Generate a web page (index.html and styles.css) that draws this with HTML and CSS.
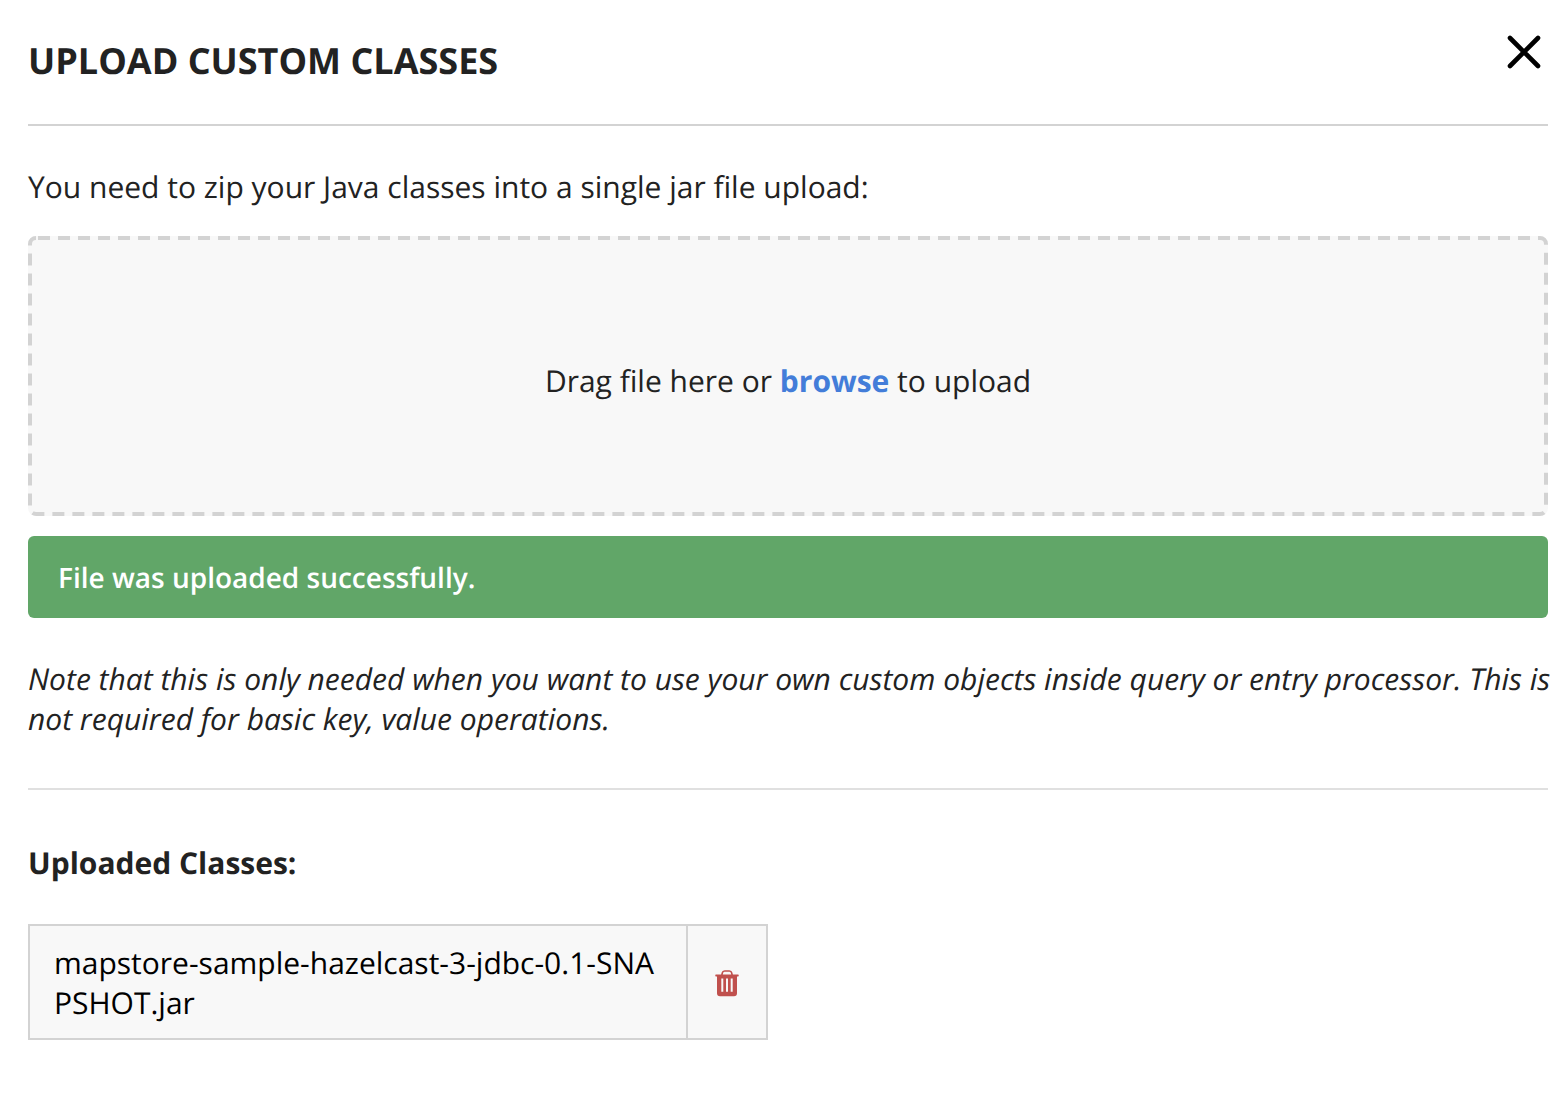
FILE: index.html
```html
<!DOCTYPE html>
<html lang="en">
<head>
<meta charset="utf-8">
<title>Upload Custom Classes</title>
<link rel="stylesheet" href="styles.css">
</head>
<body>
<main class="dialog">
  <header class="dialog-header">
    <h1 class="dialog-title">UPLOAD CUSTOM CLASSES</h1>
    <button class="close-button" type="button" aria-label="Close">
      <svg class="close-icon" viewBox="0 0 36 36" aria-hidden="true"><path d="M4 4 32 32M32 4 4 32" fill="none" stroke="currentColor" stroke-width="4.6" stroke-linecap="round"/></svg>
    </button>
  </header>
  <p class="intro">You need to zip your Java classes into a single jar file upload:</p>
  <div class="dropzone">
    <svg class="dropzone-outline" aria-hidden="true"><rect class="dropzone-dashes" x="2" y="2" rx="6"/></svg>
    <p class="dropzone-text">Drag file here or <a class="browse-link" href="#browse">browse</a> to upload</p>
  </div>
  <div class="alert" role="status">File was uploaded successfully.</div>
  <p class="note">Note that this is only needed when you want to use your own custom objects inside query or entry processor. This is not required for basic key, value operations.</p>
  <section class="uploads">
    <h2 class="uploads-title">Uploaded Classes:</h2>
    <ul class="file-list">
      <li class="file">
        <span class="file-name">mapstore-sample-hazelcast-3-jdbc-0.1-SNAPSHOT.jar</span>
        <button class="delete-button" type="button" aria-label="Delete file">
          <svg class="trash-icon" viewBox="0 0 24 28" aria-hidden="true">
            <path fill="none" stroke="currentColor" stroke-width="1.6" d="M6.800 6.500 7.300 4Q7.700 2 9.700 2h4.600Q16.300 2 16.700 4L17.200 6.500"/>
            <path fill="currentColor" fill-rule="evenodd" d="M.9 5.400h22.200q.6 0 .6.6v.8q0 .6-.6.6H22V24.200q0 3-3 3H5q-3 0-3-3V7.400H.9q-.6 0-.6-.6V6Q.3 5.400.9 5.400zM6.300 9.400v13.300h2V9.400zm4.700 0v13.300h2V9.400zm4.700 0v13.300h2V9.400z"/>
          </svg>
        </button>
      </li>
    </ul>
  </section>
</main>
</body>
</html>
```

FILE: styles.css
```css
* {
  box-sizing: border-box;
}

body {
  margin: 0;
  background: #fff;
  color: #222;
  font: 30px/40px "Open Sans", sans-serif;
  text-rendering: geometricPrecision;
}

h1, h2, p, ul {
  margin: 0;
  padding: 0;
}

button {
  padding: 0;
  border: 0;
  background: none;
  cursor: pointer;
}

.dialog {
  padding: 34px 14px 54px 28px;
}

.dialog-header {
  display: flex;
  justify-content: space-between;
  align-items: flex-start;
  padding: 0 6px 36px 0;
  border-bottom: 2px solid #d3d3d3;
}

.dialog-title {
  font-size: 36px;
  line-height: 54px;
  font-weight: 700;
}

.close-button {
  display: flex;
  color: #000;
}

.close-icon {
  width: 36px;
  height: 36px;
}

.intro {
  margin: 41px 0 29px;
}

.dropzone {
  position: relative;
  display: flex;
  align-items: center;
  justify-content: center;
  min-height: 280px;
  padding: 20px;
  border-radius: 8px;
  background: #f8f8f8;
}

.dropzone-outline {
  position: absolute;
  inset: 0;
  width: 100%;
  height: 100%;
  pointer-events: none;
}

.dropzone-dashes {
  width: calc(100% - 4px);
  height: calc(100% - 4px);
  fill: none;
  stroke: #d3d3d3;
  stroke-width: 4px;
  stroke-dasharray: 12 8;
  stroke-dashoffset: -2px;
}

.dropzone-text {
  padding-top: 10px;
}

.browse-link {
  color: #437dd9;
  font-weight: 700;
  text-decoration: none;
}

.alert {
  margin-top: 20px;
  padding: 22px 30px 20px;
  border-radius: 6px;
  background: #61a668;
  color: #fff;
  font-size: 28px;
  font-weight: 600;
}

.note {
  margin: 41px -6px 49px 0;
  font-style: italic;
}

.uploads {
  padding-top: 53px;
  border-top: 2px solid #e0e0e0;
}

.uploads-title {
  font-size: 30px;
  font-weight: 700;
}

.file-list {
  margin-top: 41px;
  list-style: none;
}

.file {
  display: flex;
  max-width: 740px;
  border: 2px solid #d3d3d3;
  background: #f8f8f8;
  color: #000;
}

.file-name {
  flex: 1;
  min-width: 0;
  padding: 17px 24px 15px;
  word-break: break-all;
}

.delete-button {
  display: flex;
  align-items: center;
  justify-content: center;
  width: 80px;
  padding-top: 2px;
  border-left: 2px solid #d3d3d3;
  color: #c0504d;
}

.trash-icon {
  width: 24px;
  height: 28px;
}
```
